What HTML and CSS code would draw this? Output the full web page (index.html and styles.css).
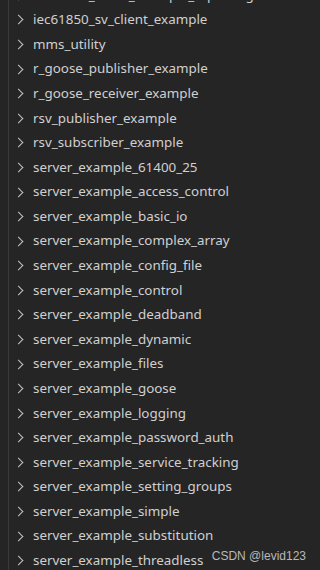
FILE: index.html
```html
<!DOCTYPE html>
<html>
<head>
<meta charset="utf-8">
<link rel="stylesheet" href="styles.css">
</head>
<body>
<div class="tree">
  <div class="guide"></div>
  <ul class="list">
    <li class="row"><span class="chev"></span><span class="name">iec61850_client_example_reporting</span></li>
    <li class="row"><span class="chev"></span><span class="name">iec61850_sv_client_example</span></li>
    <li class="row"><span class="chev"></span><span class="name">mms_utility</span></li>
    <li class="row"><span class="chev"></span><span class="name">r_goose_publisher_example</span></li>
    <li class="row"><span class="chev"></span><span class="name">r_goose_receiver_example</span></li>
    <li class="row"><span class="chev"></span><span class="name">rsv_publisher_example</span></li>
    <li class="row"><span class="chev"></span><span class="name">rsv_subscriber_example</span></li>
    <li class="row"><span class="chev"></span><span class="name">server_example_61400_25</span></li>
    <li class="row"><span class="chev"></span><span class="name">server_example_access_control</span></li>
    <li class="row"><span class="chev"></span><span class="name">server_example_basic_io</span></li>
    <li class="row"><span class="chev"></span><span class="name">server_example_complex_array</span></li>
    <li class="row"><span class="chev"></span><span class="name">server_example_config_file</span></li>
    <li class="row"><span class="chev"></span><span class="name">server_example_control</span></li>
    <li class="row"><span class="chev"></span><span class="name">server_example_deadband</span></li>
    <li class="row"><span class="chev"></span><span class="name">server_example_dynamic</span></li>
    <li class="row"><span class="chev"></span><span class="name">server_example_files</span></li>
    <li class="row"><span class="chev"></span><span class="name">server_example_goose</span></li>
    <li class="row"><span class="chev"></span><span class="name">server_example_logging</span></li>
    <li class="row"><span class="chev"></span><span class="name">server_example_password_auth</span></li>
    <li class="row"><span class="chev"></span><span class="name">server_example_service_tracking</span></li>
    <li class="row"><span class="chev"></span><span class="name">server_example_setting_groups</span></li>
    <li class="row"><span class="chev"></span><span class="name">server_example_simple</span></li>
    <li class="row"><span class="chev"></span><span class="name">server_example_substitution</span></li>
    <li class="row"><span class="chev"></span><span class="name">server_example_threadless</span></li>
  </ul>
  <div class="watermark">CSDN @levid123</div>
</div>
</body>
</html>
```
FILE: styles.css
```css
html, body {
  margin: 0;
  padding: 0;
  background: #252526;
  width: 320px;
  height: 570px;
  overflow: hidden;
}
.tree {
  position: relative;
  width: 320px;
  height: 570px;
  overflow: hidden;
  background: #252526;
  font-family: "Noto Sans", "Open Sans", sans-serif;
}
.guide {
  position: absolute;
  left: 8px;
  top: 0;
  width: 1px;
  height: 570px;
  background: #3a3a3a;
}
.list {
  list-style: none;
  margin: -16.9px 0 0 0;
  padding: 0;
}
.row {
  height: 24.59px;
  display: flex;
  align-items: center;
  padding-left: 17px;
  color: #d0d0d0;
  font-size: 13.4px;
  white-space: nowrap;
}
.chev {
  width: 6px;
  height: 6px;
  border-right: 1.3px solid #c5c5c5;
  border-bottom: 1.3px solid #c5c5c5;
  transform: rotate(-45deg);
  margin-left: -2px;
  margin-right: 11px;
  flex: none;
}
.name {
  line-height: 1;
}
.watermark {
  position: absolute;
  right: 14px;
  bottom: 7px;
  font-family: "Liberation Sans", Arial, sans-serif;
  font-size: 12px;
  color: #b8b8b8;
}
```
